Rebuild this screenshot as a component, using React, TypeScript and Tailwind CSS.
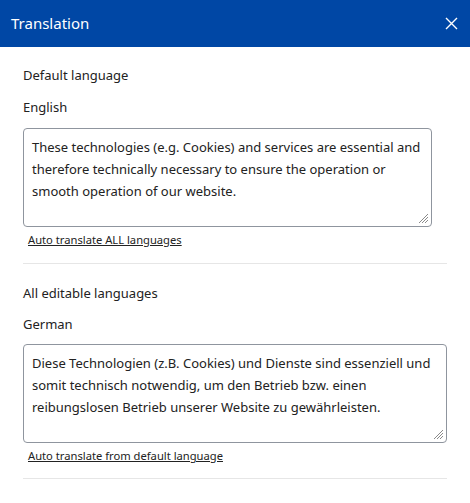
const font = { fontFamily: '"Noto Sans", "Open Sans", sans-serif' };

function Resize() {
  return (
    <svg className="absolute right-[2px] bottom-[2px]" width="11" height="11" viewBox="0 0 11 11">
      <path d="M10 1 L1 10 M10 4 L4 10 M10 7 L7 10" stroke="#8a8a8a" strokeWidth="1" fill="none" />
    </svg>
  );
}

function Field({ text, width, link }: { text: string; width: string; link: string }) {
  return (
    <div className="flex flex-col">
      <div className={`relative h-[99px] rounded-[4px] border border-[#8f959e] bg-white pl-[8px] pr-[10px] pt-[7px] text-[13px] leading-[22px] text-[#222] ${width}`}>
        {text}
        <Resize />
      </div>
      <a className="mt-[5px] ml-[5px] text-[11.2px] leading-[16px] text-[#222] underline">{link}</a>
    </div>
  );
}

export default function App() {
  return (
    <div className="w-[470px] h-[503px] bg-white overflow-hidden" style={font}>
      <div className="h-[47px] bg-[#0047a5] flex items-center justify-between pl-[11px] pr-[12px]">
        <span className="text-white text-[15px]">Translation</span>
        <svg width="13" height="13" viewBox="0 0 13 13">
          <path d="M1 1 L12 12 M12 1 L1 12" stroke="white" strokeWidth="1.4" />
        </svg>
      </div>
      <div className="px-[23px] text-[13px] text-[#222]">
        <div className="pt-[18px] leading-[20px]">Default language</div>
        <div className="mt-[12px] leading-[20px]">English</div>
        <div className="mt-[11px]">
          <Field
            width="w-[409px]"
            text="These technologies (e.g. Cookies) and services are essential and therefore technically necessary to ensure the operation or smooth operation of our website."
            link="Auto translate ALL languages"
          />
        </div>
        <div className="mt-[15px] border-t border-[#e6e6e6]" />
        <div className="pt-[19px] leading-[20px]">All editable languages</div>
        <div className="mt-[11px] leading-[20px]">German</div>
        <div className="mt-[10px]">
          <Field
            width="w-[424px]"
            text="Diese Technologien (z.B. Cookies) und Dienste sind essenziell und somit technisch notwendig, um den Betrieb bzw. einen reibungslosen Betrieb unserer Website zu gewährleisten."
            link="Auto translate from default language"
          />
        </div>
        <div className="mt-[14px] border-t border-[#e6e6e6]" />
      </div>
    </div>
  );
}
